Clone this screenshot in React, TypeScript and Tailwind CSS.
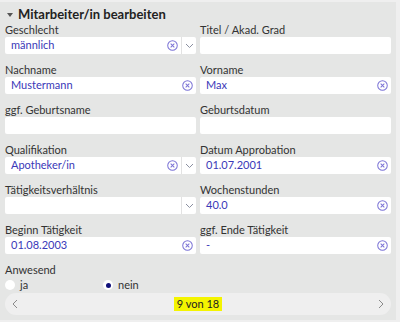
import { ReactNode } from "react";

// kleines Formular "Mitarbeiter/in bearbeiten"

function ClearIcon() {
  return (
    <svg width="11" height="11" viewBox="0 0 12 12" className="shrink-0">
      <circle cx="6" cy="6" r="5.2" fill="none" stroke="#7b73d6" strokeWidth="1.1" />
      <path d="M4 4 L8 8 M8 4 L4 8" stroke="#7b73d6" strokeWidth="1.1" />
    </svg>
  );
}

function Chevron() {
  return (
    <svg width="9" height="6" viewBox="0 0 9 6">
      <path d="M1 1 L4.5 4.5 L8 1" fill="none" stroke="#8a8fa0" strokeWidth="1" />
    </svg>
  );
}

function Feld({ label, value, clear, select }: { label: string; value?: string; clear?: boolean; select?: boolean }) {
  return (
    <div className="flex flex-col">
      <span className="text-[11px] leading-[14px] text-[#333] h-[14px]">{label}</span>
      <div className="h-[17px] bg-white rounded-[2px] flex items-center">
        <span className="flex-1 pl-[6px] text-[11px] text-[#3a38b8] truncate">{value}</span>
        {clear && <span className="pr-[3px] flex items-center"><ClearIcon /></span>}
        {select && (
          <span className="w-[15px] h-full border-l border-[#e2e2e2] flex items-center justify-center">
            <Chevron />
          </span>
        )}
      </div>
    </div>
  );
}

function Radio({ checked, children }: { checked?: boolean; children: ReactNode }) {
  return (
    <label className="flex items-center gap-[5px]">
      <span className="w-[10px] h-[10px] rounded-full bg-white flex items-center justify-center">
        {checked && <span className="w-[5px] h-[5px] rounded-full bg-[#10107a]" />}
      </span>
      <span className="text-[11px] text-[#333]">{children}</span>
    </label>
  );
}

export default function App() {
  return (
    <main className="w-[400px] h-[322px] bg-[#efefef] pt-[2px] overflow-hidden" style={{ fontFamily: "Lato, 'Open Sans', sans-serif" }}>
      <div className="w-[396px] h-[318px] bg-[#e5e6e5] px-[5px] pt-[5px]">
        <div className="flex items-center gap-[5px] h-[16px] pl-[2px]">
          <span className="w-0 h-0 border-l-[3px] border-r-[3px] border-t-[4px] border-l-transparent border-r-transparent border-t-[#555]" />
          <span className="text-[13px] font-bold text-[#222]">Mitarbeiter/in bearbeiten</span>
        </div>

        <div className="grid grid-cols-2 gap-x-[4px] gap-y-[9px]">
          <Feld label="Geschlecht" value="männlich" clear select />
          <Feld label="Titel / Akad. Grad" />
          <Feld label="Nachname" value="Mustermann" clear />
          <Feld label="Vorname" value="Max" clear />
          <Feld label="ggf. Geburtsname" />
          <Feld label="Geburtsdatum" />
          <Feld label="Qualifikation" value="Apotheker/in" clear select />
          <Feld label="Datum Approbation" value="01.07.2001" clear />
          <Feld label="Tätigkeitsverhältnis" select />
          <Feld label="Wochenstunden" value="40.0" clear />
          <Feld label="Beginn Tätigkeit" value="01.08.2003" clear />
          <Feld label="ggf. Ende Tätigkeit" value="-" clear />
        </div>

        <div className="mt-[9px]">
          <span className="text-[11px] leading-[14px] text-[#333] block">Anwesend</span>
          <div className="grid grid-cols-[98px_1fr] h-[12px]">
            <Radio>ja</Radio>
            <Radio checked>nein</Radio>
          </div>
        </div>

        <div className="mt-[4px] h-[22px] rounded-full bg-[#efefef] flex items-center justify-between px-[7px]">
          <svg width="6" height="10" viewBox="0 0 6 10">
            <path d="M5 1 L1 5 L5 9" fill="none" stroke="#8a8a8a" strokeWidth="1" />
          </svg>
          <span className="bg-[#f4f400] px-[3px] text-[11px] leading-[14px] text-[#222]">9 von 18</span>
          <svg width="6" height="10" viewBox="0 0 6 10">
            <path d="M1 1 L5 5 L1 9" fill="none" stroke="#8a8a8a" strokeWidth="1" />
          </svg>
        </div>
      </div>
    </main>
  );
}
